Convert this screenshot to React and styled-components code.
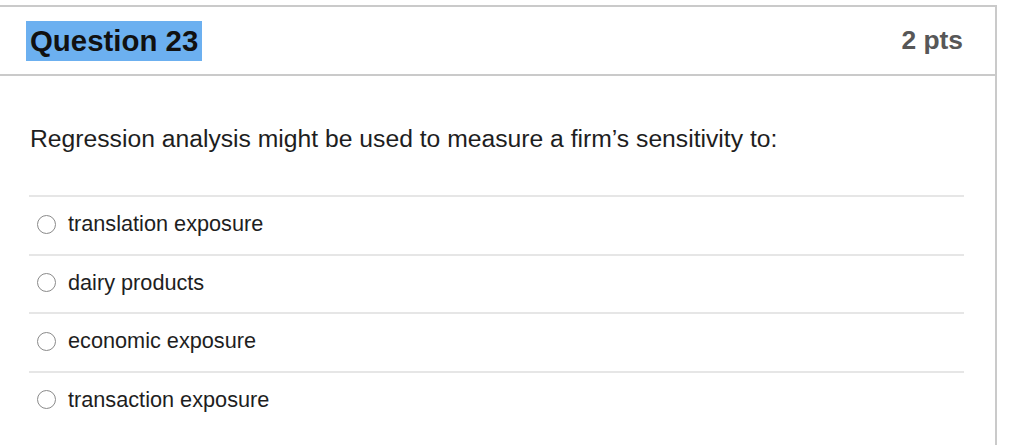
import React from "react";
import styled, { createGlobalStyle } from "styled-components";

const Global = createGlobalStyle`
  html, body { margin: 0; padding: 0; background: #fff; }
  body { font-family: "Liberation Sans", Arial, sans-serif; overflow: hidden; }
`;

const Card = styled.div`
  margin-top: 5px;
  margin-left: -2px;
  width: 999px;
  box-sizing: border-box;
  border: 2px solid #cacaca;
  border-bottom: none;
  height: 445px;
`;

const Header = styled.div`
  display: flex;
  align-items: center;
  justify-content: space-between;
  height: 67px;
  padding: 0 32px 0 26px;
  border-bottom: 2px solid #cacaca;
`;

const Title = styled.h2`
  margin: 0;
  font-size: 29.4px;
  font-weight: 700;
  color: #111;
  line-height: 40px;
  padding: 0 4px;
  background: #6cb0f0;
`;

const Points = styled.div`
  font-size: 26.4px;
  font-weight: 700;
  color: #575757;
`;

const Body = styled.div`
  padding: 0 31px 0 29px;
`;

const Prompt = styled.p`
  margin: 48px 0 41px 1px;
  font-size: 24.7px;
  line-height: 30px;
  color: #1e1e1e;
`;

const Answers = styled.div`
  display: flex;
  flex-direction: column;
`;

const Row = styled.label`
  display: flex;
  align-items: center;
  gap: 12px;
  height: 58.5px;
  box-sizing: border-box;
  border-top: 2px solid #e6e6e6;
  padding: 0 0 2px 8px;
  font-size: 21.7px;
  color: #1e1e1e;
`;

const Radio = styled.span`
  width: 19px;
  height: 19px;
  box-sizing: border-box;
  border: 1.5px solid #8a8a8a;
  border-radius: 50%;
  flex: none;
`;

const answers = [
  "translation exposure",
  "dairy products",
  "economic exposure",
  "transaction exposure",
];

export default function App() {
  return (
    <>
      <Global />
      <Card>
        <Header>
          <Title>Question 23</Title>
          <Points>2 pts</Points>
        </Header>
        <Body>
          <Prompt>
            Regression analysis might be used to measure a firm’s sensitivity to:
          </Prompt>
          <Answers>
            {answers.map((a) => (
              <Row key={a}>
                <Radio />
                {a}
              </Row>
            ))}
          </Answers>
        </Body>
      </Card>
    </>
  );
}
